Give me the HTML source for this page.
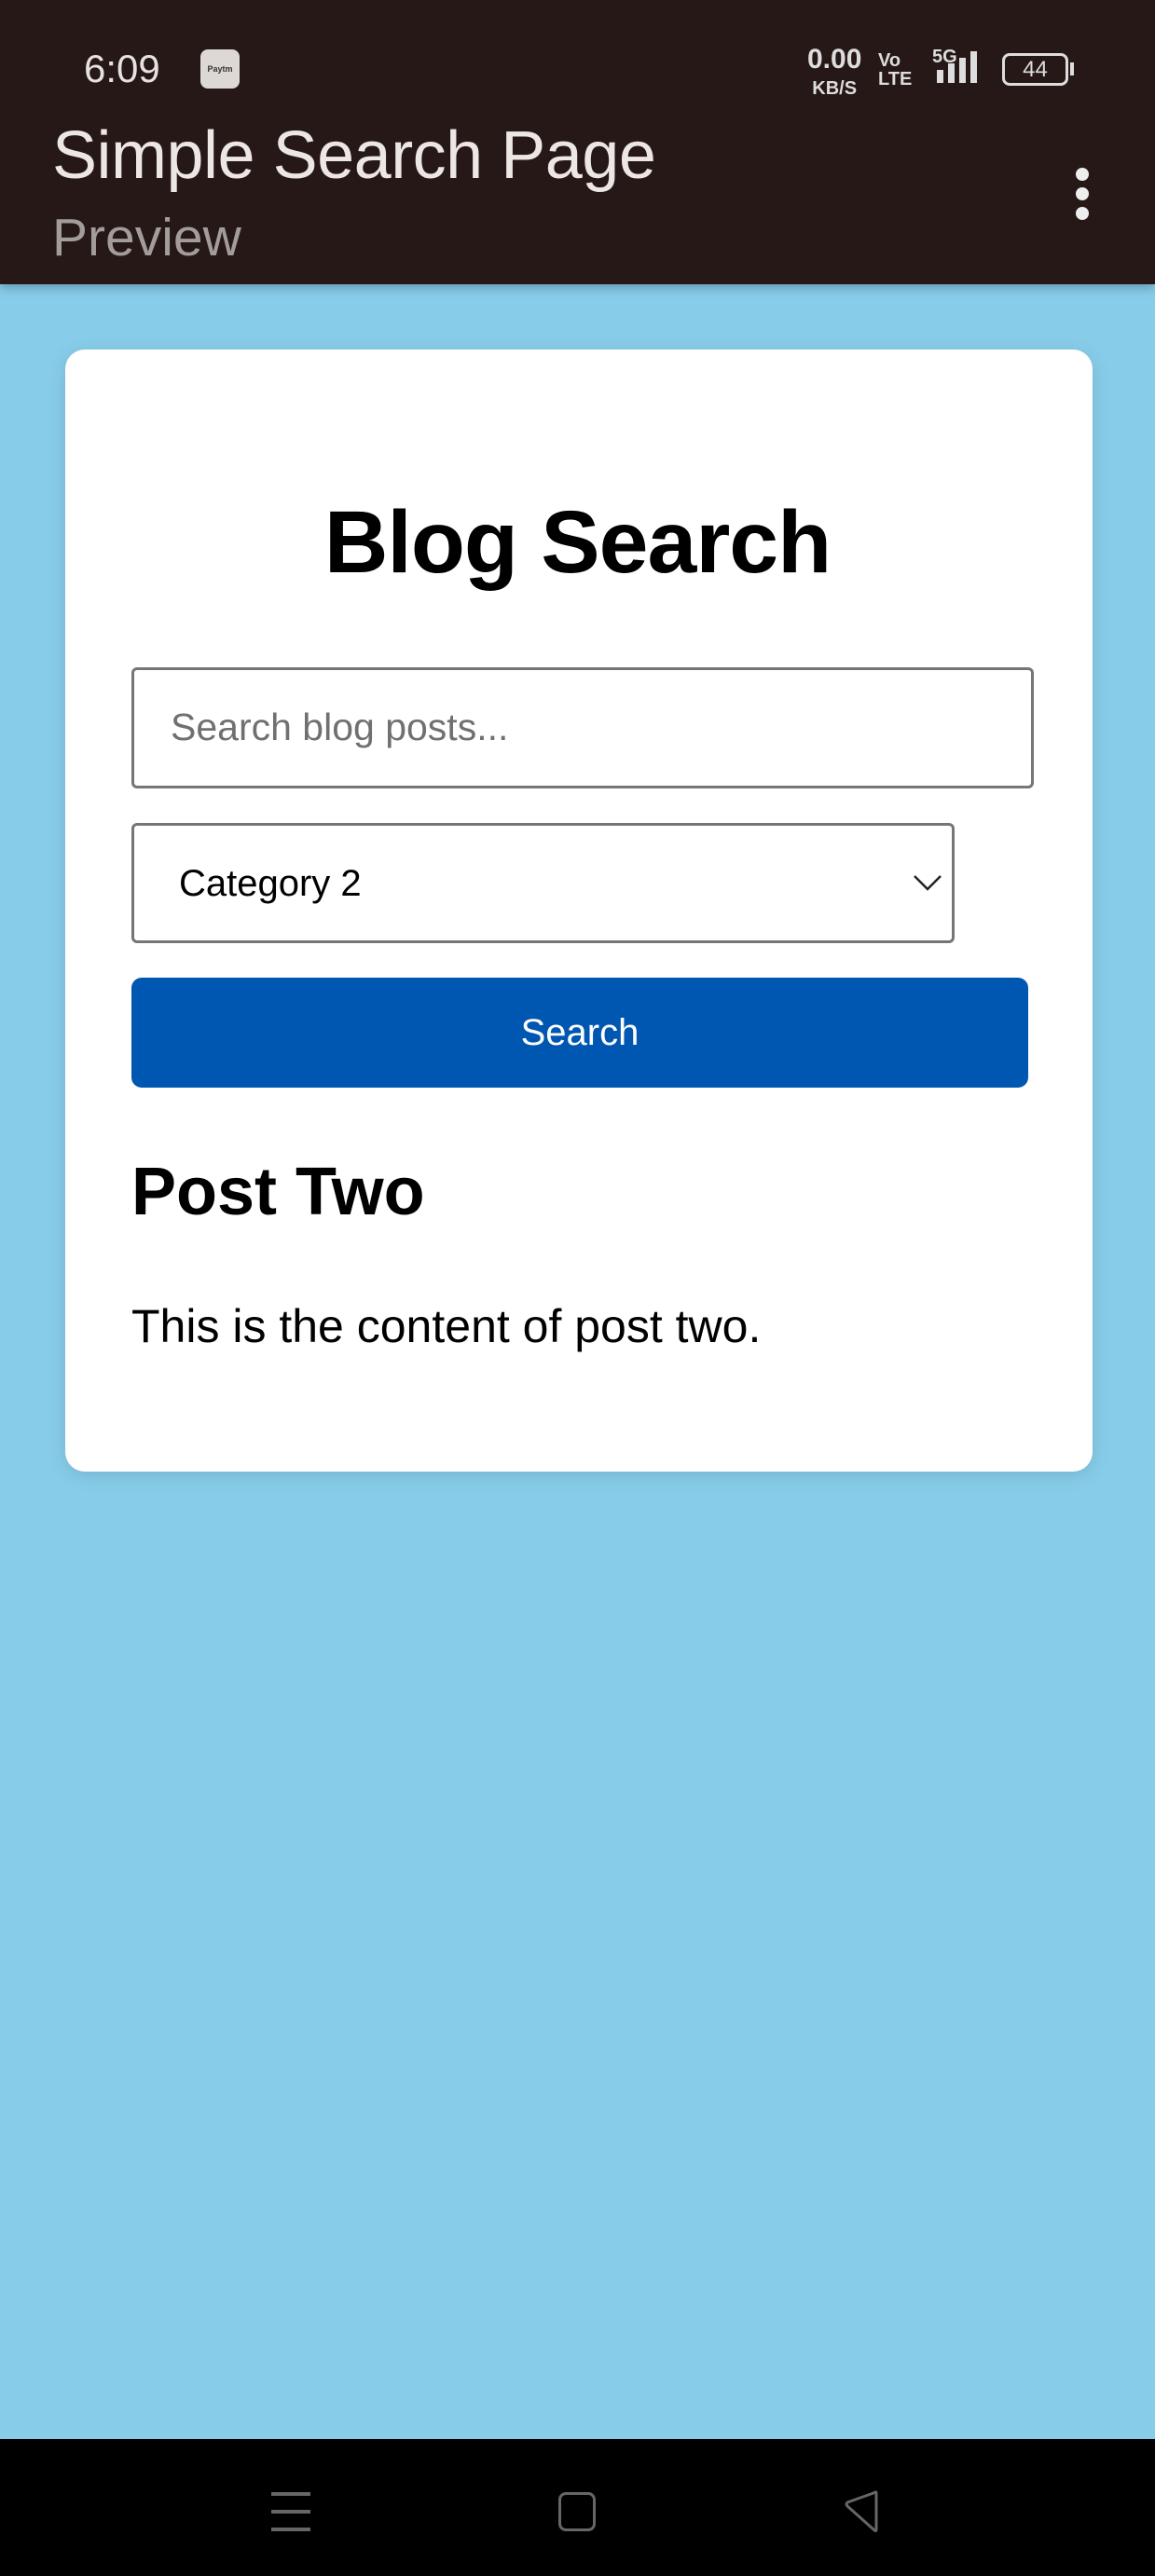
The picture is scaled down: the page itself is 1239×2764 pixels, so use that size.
<!DOCTYPE html>
<html><head><meta charset="utf-8"><style>
*{margin:0;padding:0;box-sizing:border-box}
body{width:1239px;height:2764px;background:#87cdea;font-family:"Liberation Sans",sans-serif;position:relative;overflow:hidden}
.abs{position:absolute}
#hdr{left:0;top:0;width:1239px;height:305px;background:#261816;box-shadow:0 4px 10px rgba(0,0,0,.25)}
#card{left:70px;top:375px;width:1102px;height:1204px;background:#fff;border-radius:21px;box-shadow:0 4px 20px rgba(0,0,0,.12)}
#nav{left:0;top:2617px;width:1239px;height:147px;background:#000}
</style></head><body>
<div id="hdr" class="abs">
 <div class="abs" style="left:90px;top:50px;font-size:42px;color:#e6e2e0">6:09</div>
 <div class="abs" style="left:215px;top:53px;width:42px;height:42px;border-radius:8px;background:#ddd8d6;font-size:9px;font-weight:bold;color:#333;text-align:center;line-height:42px">Paytm</div>
 <div class="abs" style="left:866px;top:50px;font-size:30px;color:#ddd;line-height:28px;text-align:center;font-weight:bold">0.00<br><span style="font-size:20px">KB/S</span></div>
 <div class="abs" style="left:942px;top:55px;font-size:20px;color:#ddd;line-height:20px;font-weight:bold">Vo<br>LTE</div>
 <div class="abs" style="left:1000px;top:50px;font-size:20px;color:#ddd;font-weight:bold">5G</div>
 <div class="abs" style="left:1005px;top:75px;width:7px;height:14px;background:#ddd"></div>
 <div class="abs" style="left:1017px;top:68px;width:7px;height:21px;background:#ddd"></div>
 <div class="abs" style="left:1029px;top:62px;width:7px;height:27px;background:#ddd"></div>
 <div class="abs" style="left:1041px;top:55px;width:7px;height:34px;background:#ddd"></div>
 <div class="abs" style="left:1075px;top:57px;width:71px;height:35px;border:3px solid #ddd;border-radius:8px;color:#ddd;font-size:24px;text-align:center;line-height:29px">44</div>
 <div class="abs" style="left:1148px;top:67px;width:4px;height:14px;background:#ddd"></div>
 <div class="abs" style="left:56px;top:126px;font-size:72px;color:#ece6e4;letter-spacing:-0.5px">Simple Search Page</div>
 <div class="abs" style="left:56px;top:222px;font-size:57px;color:#a29c9a">Preview</div>
 <div class="abs" style="left:1154px;top:180px;width:14px;height:14px;border-radius:50%;background:#eee"></div>
 <div class="abs" style="left:1154px;top:201px;width:14px;height:14px;border-radius:50%;background:#eee"></div>
 <div class="abs" style="left:1154px;top:222px;width:14px;height:14px;border-radius:50%;background:#eee"></div>
</div>
<div id="card" class="abs"></div>
<div class="abs" style="left:0;width:1239px;top:528px;text-align:center;font-size:95px;font-weight:bold;color:#000;letter-spacing:-1px">Blog Search</div>
<div class="abs" style="left:141px;top:716px;width:968px;height:130px;border:3px solid #767676;border-radius:6px"></div>
<div class="abs" style="left:183px;top:757px;font-size:41px;color:#707070">Search blog posts...</div>
<div class="abs" style="left:141px;top:883px;width:883px;height:129px;border:3px solid #767676;border-radius:6px"></div>
<div class="abs" style="left:192px;top:926px;font-size:40px;color:#000">Category 2</div>
<svg class="abs" style="left:978px;top:936px" width="34" height="22"><path d="M3 4 L17 18 L31 4" fill="none" stroke="#222" stroke-width="2.5"/></svg>
<div class="abs" style="left:141px;top:1049px;width:962px;height:118px;background:#0057b1;border-radius:11px;color:#fff;font-size:40px;text-align:center;line-height:118px">Search</div>
<div class="abs" style="left:141px;top:1238px;font-size:72px;font-weight:bold;color:#000">Post Two</div>
<div class="abs" style="left:141px;top:1394px;font-size:50px;color:#000">This is the content of post two.</div>
<div id="nav" class="abs">
 <div class="abs" style="left:291px;top:57px;width:42px;height:4px;background:#666"></div>
 <div class="abs" style="left:291px;top:76px;width:42px;height:4px;background:#666"></div>
 <div class="abs" style="left:291px;top:95px;width:42px;height:4px;background:#666"></div>
 <div class="abs" style="left:599px;top:57px;width:40px;height:42px;border:3px solid #666;border-radius:8px"></div>
 <svg class="abs" style="left:900px;top:55px" width="46" height="46"><path d="M40 3 L40 42 Q40 45 37 42 L9 17 Q7 15 9 13 L37 3 Q40 1 40 3Z" fill="none" stroke="#666" stroke-width="3" stroke-linejoin="round"/></svg>
</div>
</body></html>
